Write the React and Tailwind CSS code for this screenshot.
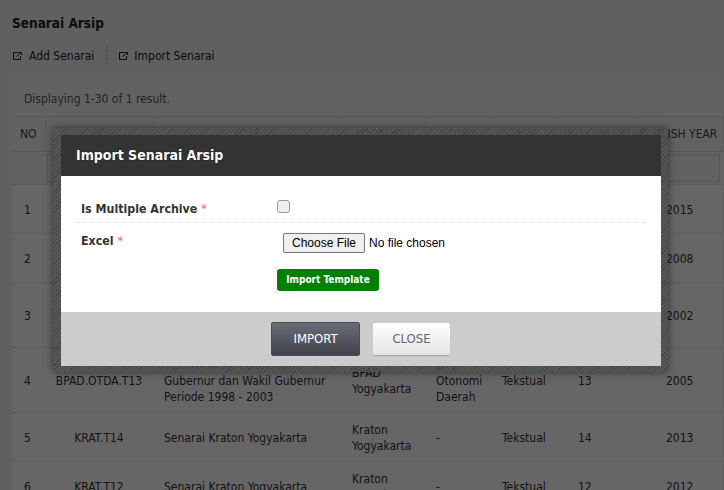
import React from "react";

const rows = [
  { no: 1, code: "KRAT.T16", title: ["Senarai Arsip Pemerintahan"], loc: ["BPAD", "Yogyakarta"], story: ["-"], type: "Tekstual", id: 16, year: 2015, h: "h-[49px]" },
  { no: 2, code: "KRAT.T15", title: ["Senarai Arsip Kepegawaian"], loc: ["BPAD", "Yogyakarta"], story: ["-"], type: "Tekstual", id: 15, year: 2008, h: "h-[49px]" },
  { no: 3, code: "KRAT.T13", title: ["Senarai Arsip Pemilihan", "Kepala Daerah", "Periode 1998"], loc: ["BPAD", "Yogyakarta"], story: ["Biro", "Otonomi", "Daerah"], type: "Tekstual", id: 14, year: 2002, h: "h-[65px]" },
  { no: 4, code: "BPAD.OTDA.T13", title: ["Senarai Arsip Pelantikan", "Gubernur dan Wakil Gubernur", "Periode 1998 - 2003"], loc: ["BPAD", "Yogyakarta"], story: ["Biro", "Otonomi", "Daerah"], type: "Tekstual", id: 13, year: 2005, h: "h-[65px]" },
  { no: 5, code: "KRAT.T14", title: ["Senarai Kraton Yogyakarta"], loc: ["Kraton", "Yogyakarta"], story: ["-"], type: "Tekstual", id: 14, year: 2013, h: "h-[49px]" },
  { no: 6, code: "KRAT.T12", title: ["Senarai Kraton Yogyakarta"], loc: ["Kraton", "Yogyakarta"], story: ["-"], type: "Tekstual", id: 12, year: 2012, h: "h-[49px]" },
];

const headers = ["NO", "CODE", "TITLE", "LOCATION", "STORY", "TYPE", "ID (NUMBER)", "PUBLISH YEAR"];

const Lines = ({ items }) => items.map((t) => <div key={t}>{t}</div>);

const LinkIcon = () => (
  <svg width="9" height="8" viewBox="0 0 9 8" fill="none" stroke="currentColor" strokeWidth="1" className="shrink-0">
    <path d="M5.5 .5H.5v7h7V4" />
    <path d="M3.5 4.5 7.5 1M6 .5h2.5V3" />
  </svg>
);

export default function App() {
  return (
    <div className="relative h-[490px] w-[724px] overflow-hidden bg-[#f1f1f1] font-['DejaVu_Sans',sans-serif] text-xs text-[#333] [font-stretch:condensed]">
      {/* Page behind the modal */}
      <div className="px-3 pt-[14px]">
        <h1 className="text-[13.5px] font-bold leading-[18px] text-[#222]">Senarai Arsip</h1>
        <div className="mt-[14px] flex h-[20px] items-center text-[#222]">
          <span className="flex items-center gap-[7px] pl-[1px] pr-[12px]">
            <LinkIcon />
            Add Senarai
          </span>
          <span className="flex h-[20px] items-center gap-[6px] border-l border-dotted border-[#aaa] pl-[12px]">
            <LinkIcon />
            Import Senarai
          </span>
        </div>

        <div className="mt-[13px] w-[710px] border-t border-[#f6f6f6] bg-[#f5f5f5]">
          <div className="flex h-[36px] items-center pl-3 pt-[2px] text-[#555]">Displaying 1-30 of 1 result.</div>
          <table className="w-[710px] table-fixed border-collapse bg-white">
            <colgroup>
              <col className="w-[33px]" />
              <col className="w-[108px]" />
              <col className="w-[188px]" />
              <col className="w-[84px]" />
              <col className="w-[66px]" />
              <col className="w-[64px]" />
              <col className="w-[80px]" />
              <col className="w-[87px]" />
            </colgroup>
            <thead>
              <tr className="h-[35px] border-y border-[#d8d8d8] bg-[#f6f6f6]">
                {headers.map((h) => (
                  <th key={h} className="truncate border-r border-[#e0e0e0] text-center font-normal text-[#444]">
                    {h}
                  </th>
                ))}
              </tr>
              <tr className="h-[33px] border-b border-[#e0e0e0] bg-[#f6f6f6]">
                <td />
                {headers.slice(1).map((h) => (
                  <td key={h} className="px-[2px]">
                    <div className="flex h-[28px] items-center border border-dotted border-[#bbb] px-[6px] text-[#999]">filter</div>
                  </td>
                ))}
              </tr>
            </thead>
            <tbody>
              {rows.map((r) => (
                <tr key={r.no} className={`${r.h} border-b border-[#e4e4e4] leading-[16px] text-[#333]`}>
                  <td className="pr-[2px] pt-[2px] text-center">{r.no}</td>
                  <td className="pt-[2px] text-center">{r.code}</td>
                  <td className="pl-[11px] pt-[2px]"><Lines items={r.title} /></td>
                  <td className="pl-[11px] pt-[2px]"><Lines items={r.loc} /></td>
                  <td className="pl-[11px] pt-[2px]"><Lines items={r.story} /></td>
                  <td className="pl-[11px] pt-[2px]">{r.type}</td>
                  <td className="pl-[23px] pt-[2px]">{r.id}</td>
                  <td className="pl-[31px] pt-[2px]">{r.year}</td>
                </tr>
              ))}
            </tbody>
          </table>
        </div>
      </div>

      {/* Overlay */}
      <div className="absolute inset-0 bg-black/60" />

      {/* Modal */}
      <div className="absolute left-[53px] top-[128px] w-[615px] bg-[repeating-linear-gradient(135deg,rgba(66,66,66,0.85)_0px,rgba(66,66,66,0.85)_1px,rgba(84,84,84,0.85)_1px,rgba(84,84,84,0.85)_3px)] pb-[6px] pl-[8px] pr-[7px] pt-[7px] shadow-[0_0_8px_rgba(0,0,0,0.5)]">
        <div className="flex h-[41px] items-center bg-[#333] pl-[15px] text-[14px] font-bold text-white [text-shadow:0_0_1px_#000]">
          Import Senarai Arsip
        </div>
        <div className="h-[136px] bg-white pl-[15px] pr-[15px] text-[#333]">
          <div className="flex h-[47px] border-b border-dotted border-[#ddd] pl-[5px] pt-[25px]">
            <span className="w-[196px] text-[12.3px] font-bold leading-[16px]">
              Is Multiple Archive <span className="font-normal text-[#f66]">*</span>
            </span>
            <input type="checkbox" className="mt-[-1px] h-[13px] w-[13px] appearance-none rounded-[3px] border border-[#999] bg-[#eee]" />
          </div>
          <div className="flex pl-[5px] pt-[10px]">
            <span className="w-[202px] text-[12.3px] font-bold leading-[16px]">
              Excel <span className="font-normal text-[#f66]">*</span>
            </span>
            <div>
              <input
                type="file"
                className="block h-[21px] w-[240px] font-['Liberation_Sans',sans-serif] text-[12px] text-black file:mr-[4px] file:h-[20px] file:w-[82px] file:rounded-[2px] file:border file:border-solid file:border-[#777] file:bg-[#efefef] file:font-['Liberation_Sans',sans-serif] file:text-[12px] file:text-black"
              />
              <button className="ml-[-6px] mt-[15px] flex h-[22px] w-[102px] items-center justify-center rounded-[3px] bg-[#008000] text-[10px] font-bold text-white">
                Import Template
              </button>
            </div>
          </div>
        </div>
        <div className="flex h-[54px] items-center justify-center gap-[13px] bg-[#ccc] pr-[1px]">
          <button className="h-[34px] w-[89px] rounded-[2px] border border-[#4a4d55] bg-gradient-to-b from-[#6a6c76] to-[#42444c] text-[13px] text-white">
            IMPORT
          </button>
          <button className="h-[32px] w-[77px] rounded-[2px] bg-gradient-to-b from-white to-[#e4e4e4] text-[13px] text-[#666] shadow-[0_1px_1px_rgba(0,0,0,0.2)]">
            CLOSE
          </button>
        </div>
      </div>
    </div>
  );
}
